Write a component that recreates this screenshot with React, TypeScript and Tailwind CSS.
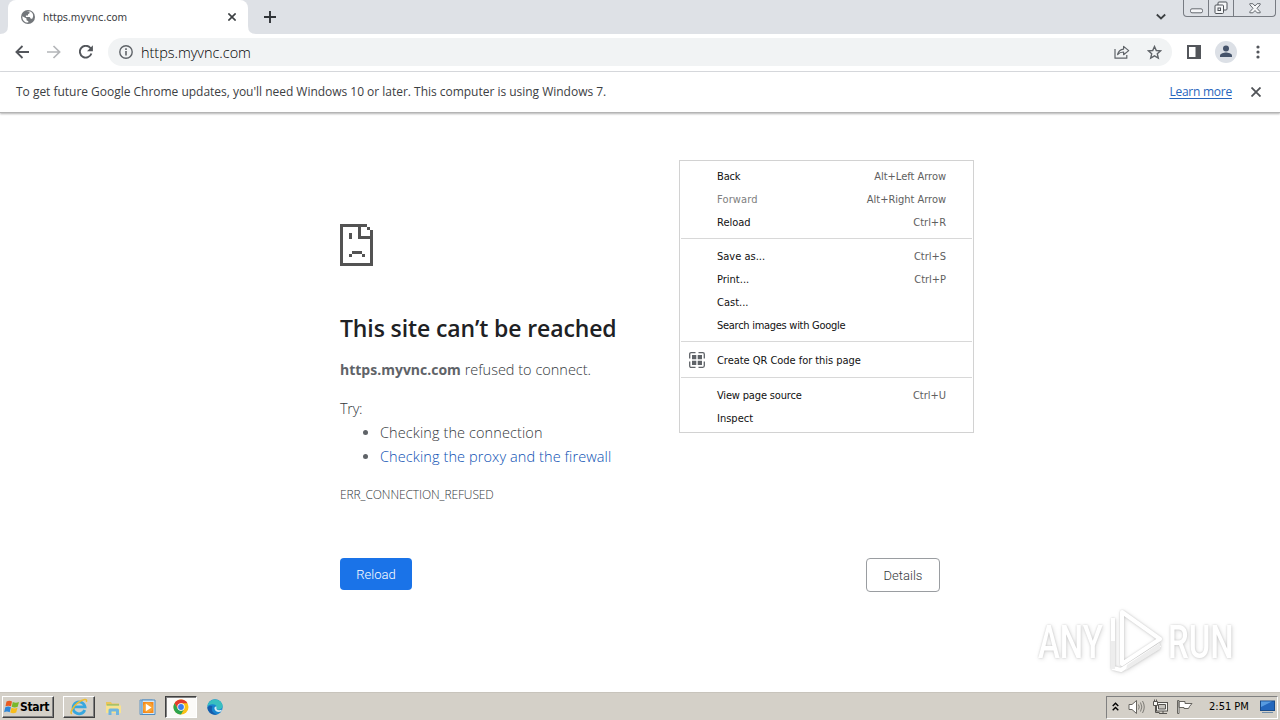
import type { ReactNode } from "react";

type MenuEntry = { label: string; keys?: string; off?: boolean; fit?: string };

const navItems: MenuEntry[] = [
  { label: "Back", keys: "Alt+Left Arrow", fit: "tracking-[-0.15px]" },
  { label: "Forward", keys: "Alt+Right Arrow", off: true, fit: "tracking-[0.15px]" },
  { label: "Reload", keys: "Ctrl+R" },
];
const pageItems: MenuEntry[] = [
  { label: "Save as...", keys: "Ctrl+S" },
  { label: "Print...", keys: "Ctrl+P" },
  { label: "Cast..." },
  { label: "Search images with Google", fit: "tracking-[-0.28px]" },
];
const devItems: MenuEntry[] = [
  { label: "View page source", keys: "Ctrl+U", fit: "tracking-[-0.17px]" },
  { label: "Inspect" },
];

function MenuRow({ label, keys, off, fit = "" }: MenuEntry) {
  return (
    <div className={`flex h-[23px] items-center justify-between pr-[27px] pl-[37px] ${off ? "text-[#808080]" : "text-[#111]"}`}>
      <span className={fit}>{label}</span>
      {keys && <span className="tracking-[-0.02px] text-[#606060]">{keys}</span>}
    </div>
  );
}

function ContextMenu() {
  return (
    <div className="absolute top-[160px] left-[679px] h-[273px] w-[295px] border border-[#d2d2d2] bg-white pt-1 font-['DejaVu_Sans_Condensed','DejaVu_Sans',sans-serif] text-[11px] leading-none whitespace-nowrap">
      {navItems.map((i) => <MenuRow key={i.label} {...i} />)}
      <div className="mx-px mt-1 mb-[6px] h-px bg-[#d8d8d8]" />
      {pageItems.map((i) => <MenuRow key={i.label} {...i} />)}
      <div className="mx-px mt-[4px] h-px bg-[#d8d8d8]" />
      <div className="flex h-[35px] items-center pl-[9px] text-[#111]">
        <svg width="16" height="16" viewBox="0 0 16 16" fill="none" stroke="#5f6368" strokeWidth="1.3">
          <path d="M.7 6.500V2.200Q.7.7 2.200.7H6.500M9.500.7h4.300q1.500 0 1.500 1.500V6.500M15.300 9.500v4.300q0 1.500-1.500 1.500H9.500M6.500 15.300H2.200q-1.500 0-1.500-1.500V9.500" />
          <path d="M3 3h4.300v4.300H3zM8.700 3H13v4.300H8.700zM3 8.700h4.300V13H3zM8.700 8.700H13V13H8.700z" fill="#5f6368" stroke="none" />
        </svg>
        <span className="mt-[2px] ml-3 tracking-[-0.04px]">Create QR Code for this page</span>
      </div>
      <div className="mx-px mb-[6px] h-px bg-[#d8d8d8]" />
      {devItems.map((i) => <MenuRow key={i.label} {...i} />)}
    </div>
  );
}

function TabStrip() {
  return (
    <div className="flex h-[34px] bg-[#dee1e6]">
      <svg width="8" height="34" className="shrink-0"><path d="M0 34Q8 34 8 26V34z" fill="#fff" /></svg>
      <div className="flex w-[240px] items-center rounded-t-lg bg-white pl-[13px]">
        <svg width="14" height="14" viewBox="0 0 14 14">
          <circle cx="7" cy="7" r="7" fill="#73777b" />
          <path d="M1.4 6.2 5.5 8.4v1.8l1.8 1.1v1.3C3.6 12.8 1 9.8 1.4 6.2zM5.6 1.8h2.9v1.5L7 4.3v1.3H4.9v1.5h3.8l1.1 1.7h1.4c1-1.6 1.3-3.4.5-5.1-.8-1.3-2-2.2-3.4-2.4z" fill="#fff" />
        </svg>
        <span className="mt-[2px] ml-[8px] font-['DejaVu_Sans_Condensed',sans-serif] text-[11px] tracking-[-0.13px] text-[#3c4043]">https.myvnc.com</span>
        <svg className="mr-[12px] ml-auto" width="8" height="8" viewBox="0 0 8 8" stroke="#3c4043" strokeWidth="1.6"><path d="m.4.4 7.2 7.2M7.6.4.4 7.6" /></svg>
      </div>
      <svg width="8" height="34" className="shrink-0"><path d="M8 34Q0 34 0 26V34z" fill="#fff" /></svg>
      <svg className="mt-[11px] ml-[8px]" width="12" height="12" stroke="#303338" strokeWidth="1.9"><path d="M6 0v12M0 6h12" /></svg>
      <svg className="mt-[13px] ml-auto" width="10" height="8" fill="none" stroke="#3c4043" strokeWidth="1.8"><path d="m.8 1.5 4.2 4 4.2-4" /></svg>
      <div className="mr-[4px] ml-[17px] flex h-[17px] w-[93px] rounded-b-[4px] border border-t-0 border-[#777b82]">
        <div className="flex w-[25px] items-end justify-center border-r border-[#777b82] pb-[2px]">
          <svg width="13" height="6" fill="#f5f6f8" stroke="#666a70"><rect x=".5" y=".8" width="12" height="4" rx="1.5" /></svg>
        </div>
        <div className="flex w-[25px] items-center justify-center border-r border-[#777b82]">
          <svg width="14" height="14" fill="#f5f6f8" stroke="#4f5359"><rect x="4" y="1" width="9" height="8" rx="1" /><rect x="1" y="4" width="8.5" height="8.5" rx="1" /><rect x="4" y="7" width="2.5" height="2.5" /></svg>
        </div>
        <div className="flex flex-1 items-center justify-center">
          <svg width="12" height="11" viewBox="0 0 12 11" fill="#f5f6f8" stroke="#666a70"><path d="M.8.7h3.1L6 3 8.1.7h3.1v1L8 5.3l3.2 3.5v1H8.1L6 7.5 3.9 9.8H.8v-1L4 5.3.8 1.7z" /></svg>
        </div>
      </div>
    </div>
  );
}

function Toolbar() {
  return (
    <div className="flex h-[38px] items-center border-b border-[#dadce0] bg-white pb-px pl-[15px]">
      <svg width="14" height="14" viewBox="0 0 14 14" fill="none" stroke="#53565b" strokeWidth="1.8"><path d="M14 7H1.5M7.5 1 1.4 7l6.1 6" /></svg>
      <svg className="ml-[18px]" width="14" height="14" viewBox="0 0 14 14" fill="none" stroke="#b4b6b9" strokeWidth="1.7"><path d="M0 7h12.5M6.5 1l6.1 6-6.1 6" /></svg>
      <svg className="ml-[18px]" width="14" height="14" viewBox="0 0 14 14" fill="none" stroke="#53565b" strokeWidth="1.9"><path d="M12.4 8.5A5.9 5.9 0 1 1 11.4 3L13 4.7" /><path d="M13.9.2v6H8z" fill="#53565b" stroke="none" /></svg>
      <div className="ml-[15px] flex h-[28px] w-[1064px] items-center rounded-full bg-[#f1f3f4] pl-[11px]">
        <svg width="14" height="14" viewBox="0 0 14 14" fill="none" stroke="#5f6368" strokeWidth="1.4"><circle cx="7" cy="7" r="6.2" /><path d="M7 6.1v4.3M7 3.3v1.6" strokeWidth="1.6" /></svg>
        <span className="mt-[2px] ml-[8px] font-['Open_Sans',sans-serif] text-[14.5px] font-light tracking-[-0.03px] text-black">https.myvnc.com</span>
        <svg className="ml-auto" width="16" height="14" viewBox="0 0 16 14" fill="none" stroke="#5f6368" strokeWidth="1.2"><path d="M1 4v9.2h11.8V10M3.6 9.6C4.4 6 6.2 4.3 9.6 4.1V1.4L14.7 5.6 9.6 9.7V7C7 7 5.2 7.700 3.6 9.600z" strokeLinejoin="round" /></svg>
        <svg className="mr-[10px] ml-[17px]" width="15" height="15" viewBox="0 0 15 15" fill="none" stroke="#5f6368" strokeWidth="1.4"><path d="m7.500 1.500 1.8 4 4.300.4-3.300 2.900 1 4.300-3.800-2.300-3.800 2.300 1-4.300-3.300-2.900 4.300-.4z" /></svg>
      </div>
      <svg className="ml-[15px]" width="14" height="14"><rect x="1" y="1" width="12" height="12" fill="none" stroke="#53565b" strokeWidth="2" /><path d="M8.500 1H14v12H8.500z" fill="#53565b" /></svg>
      <svg className="ml-[14px]" width="22" height="22"><circle cx="11" cy="11" r="11" fill="#dce0e6" /><circle cx="11" cy="7.600" r="3" fill="#46546b" /><path d="M5 16v-1.500c0-2 4-3 6-3s6 1 6 3V16z" fill="#46546b" /></svg>
      <svg className="ml-[19px]" width="4" height="14" fill="#53565b"><circle cx="2" cy="2" r="1.600" /><circle cx="2" cy="7" r="1.600" /><circle cx="2" cy="12" r="1.600" /></svg>
    </div>
  );
}

function InfoBar() {
  return (
    <div className="flex h-[41px] items-center border-b border-[#b4b4b4] bg-white pr-[19px] pl-4 font-['Open_Sans',sans-serif] text-[12px] whitespace-nowrap text-[#3c4043] shadow-[0_1px_2px_rgba(0,0,0,0.3)]">
      <span className="tracking-[-0.02px]">To get future Google Chrome updates, you'll need Windows 10 or later. This computer is using Windows 7.</span>
      <span className="ml-auto tracking-[-0.24px] text-[#2765bd] underline underline-offset-2">Learn more</span>
      <svg className="ml-[19px]" width="10" height="10" stroke="#505357" strokeWidth="1.800"><path d="m.5.5 9 9m0-9-9 9" /></svg>
    </div>
  );
}

function SadPage() {
  return (
    <svg width="33" height="42" shapeRendering="crispEdges" fill="#535353">
      <path d="M0 0h27v3H3v36h27V15H18V3h3v9h9V6h3v36H0zM27 3h3v3h-3zM9 9h3v6H9zM12 27h10v3H12zM9 30h3v3H9zM22 30h3v3h-3z" />
    </svg>
  );
}

function ErrorPage() {
  return (
    <main className="h-[579px] bg-white">
      <div className="ml-[340px] w-[600px] pt-[111px] font-['Open_Sans',sans-serif] text-[14.5px] leading-[24px] font-light text-[#34383c]">
        <SadPage />
        <h1 className="mt-[47px] text-[23px] leading-[30px] font-semibold tracking-[-0.12px] text-[#202124]">This site can’t be reached</h1>
        <p className="mt-[15px]"><b className="text-[14px] font-bold text-[#5f6368]">https.myvnc.com</b> refused to connect.</p>
        <p className="mt-[15px] tracking-[-0.3px]">Try:</p>
        <ul className="list-disc pl-10 tracking-[0.1px] marker:text-[#5f6368]">
          <li>Checking the connection</li>
          <li><span className="text-[#0b4fb3]">Checking the proxy and the firewall</span></li>
        </ul>
        <p className="mt-[14px] text-[12px] tracking-[-0.1px]">ERR_CONNECTION_REFUSED</p>
        <div className="mt-[51px] flex justify-between font-['Roboto',sans-serif] text-[13px] leading-none">
          <button className="h-8 w-[72px] rounded bg-[#1a73e8] text-white">Reload</button>
          <button className="h-[34px] w-[74px] rounded border border-[#9a9da1]">Details</button>
        </div>
      </div>
    </main>
  );
}

function Watermark() {
  return (
    <div className="absolute top-[608px] left-[1038px] flex h-[66px] w-[200px] items-center font-['Roboto',sans-serif] text-[47px] leading-none font-medium text-white [filter:drop-shadow(0_0_1px_rgba(0,0,0,0.16))_drop-shadow(1px_1px_2px_rgba(0,0,0,0.13))]">
      <span className="w-[70px]"><span className="inline-block origin-left scale-x-[0.7]">ANY</span></span>
      <svg width="60" height="66" viewBox="0 0 60 66" fill="none" stroke="#fff" strokeWidth="4" strokeLinejoin="round"><path d="M14 4 52 31 14 56zM5 10v50l8 2 39-25" /><path d="M19 57 52 35v6L18 62zM3 33h4v28H3z" fill="#ededed" stroke="none" /></svg>
      <span className="w-[66px]"><span className="inline-block origin-left scale-x-[0.7]">RUN</span></span>
    </div>
  );
}

function TaskButton({ children, look = "" }: { children: ReactNode; look?: string }) {
  return <div className={`flex h-[22px] w-8 items-center justify-center ${look}`}>{children}</div>;
}

function Taskbar() {
  return (
    <footer className="flex h-[28px] items-center border-t border-[#c8c4bc] bg-[#d4d0c8] pt-px font-['DejaVu_Sans_Condensed','DejaVu_Sans',sans-serif] text-[11px] whitespace-nowrap text-black">
      <div className="ml-[2px] flex h-[22px] w-[52px] items-center border border-t-white border-r-[#404040] border-b-[#404040] border-l-white pl-px shadow-[inset_-1px_-1px_#808080]">
        <svg width="16" height="16" viewBox="0 0 16 16">
          <path d="M2.500 2.500q3-1.500 5.500 0L7 7.300q-2.500-1.300-5.500 0z" fill="#e95b20" />
          <path d="M8.800 3q3 1.400 6.200 0l-1.300 4.800q-3 1.300-6 0z" fill="#79b82b" />
          <path d="M1.300 8.200q3-1.200 5.600 0l-1.200 5q-2.700-1.300-5.600 0z" fill="#2d86d8" />
          <path d="M7.500 8.700q3 1.400 6 0l-1.300 4.800q-3 1.400-5.900 0z" fill="#f8bd1b" />
        </svg>
        <span className="text-[12px] font-bold tracking-[-0.35px]">Start</span>
      </div>
      <div className="ml-[9px] flex gap-[2px]">
        <TaskButton look="border border-t-white border-l-white border-r-[#404040] border-b-[#404040] shadow-[inset_-1px_-1px_#808080]">
          <svg width="18" height="18" viewBox="0 0 18 18" fill="none">
            <path d="M14.700 12A6 6 0 1 1 15 8.800H4.500" stroke="#36a7df" strokeWidth="2.800" />
            <path d="M2 15.500c-3 0 1-7 6-10.800C13 .8 18 .2 16.300 4" stroke="#edbd31" strokeWidth="1.500" />
          </svg>
        </TaskButton>
        <TaskButton>
          <svg width="17" height="17" viewBox="0 0 17 17"><path d="M1 3h5l1 1.500h7V14H1z" fill="#e9c65a" /><path d="M2 5.500h12V9H2z" fill="#74b96d" /><path d="M1 6.500h15V14H1z" fill="#f8e28f" /><path d="M3.500 16v-5q0-1.500 1.500-1.500h7.500q1.500 0 1.500 1.500v5h-3v-3.500H6.500V16z" fill="#70b5df" /></svg>
        </TaskButton>
        <TaskButton>
          <svg width="17" height="17" viewBox="0 0 17 17"><path d="M1 1h12.500v14.500H1z" fill="#b4d5ef" stroke="#6698c4" /><path d="M3 1h13v14.500H3z" fill="#d5e8f7" stroke="#4f8cc2" /><path d="M4 3h10.500v11H4z" fill="#f58a1c" /><circle cx="9" cy="8.500" r="5" fill="#f9a334" /><path d="m6.800 4.800 5.800 3.700-5.800 3.700z" fill="#fff" /></svg>
        </TaskButton>
        <TaskButton look="border border-t-[#404040] border-l-[#404040] border-r-white border-b-white bg-[#fbfaf8] shadow-[inset_1px_1px_#808080]">
          <svg width="16" height="16" viewBox="0 0 16 16">
            <circle cx="8" cy="8" r="7.500" fill="#fbc116" />
            <path d="M1.500 4.250A7.500 7.500 0 0 1 14.500 4.250H8L4.750 9.870z" fill="#e33b2e" />
            <path d="M1.500 4.250 4.750 9.870 8 11.750l3.250-1.880L8 15.500A7.500 7.500 0 0 1 1.500 4.250z" fill="#2da44e" />
            <circle cx="8" cy="8" r="3.700" fill="#fff" /><circle cx="8" cy="8" r="2.900" fill="#3b7ded" />
          </svg>
        </TaskButton>
        <TaskButton>
          <svg width="16" height="16" viewBox="0 0 16 16">
            <circle cx="8" cy="8" r="7.700" fill="#1784d0" />
            <path d="M.4 7.500C1 1.500 7-.8 11.500 1.200 15.800 3 17 8.500 13.500 10.200c-2 .9-4.500.3-4.200-.8C10.500 7 8 5 5.500 5.200 3 5.300 1 6.500.4 7.500z" fill="#38bfc0" />
            <path d="M9.500 9c-.5 1.700 1.500 2.800 5.500 1.700l-.9 1.800c-3.300 1.200-6.500-.4-6.700-3 0-1.400 1-2.500 2.100-2z" fill="#d4ecf5" />
            <path d="M5.500 7.500C3.500 11 6 15 10.500 15.300 5 16.800.8 13 .4 8.500 2 6.500 4 6.300 5.500 7.500z" fill="#165baa" />
          </svg>
        </TaskButton>
      </div>
      <div className="mr-[2px] ml-auto flex h-[23px] w-[172px] items-center border border-t-[#808080] border-r-white border-b-white border-l-[#808080] pl-[5px]">
        <svg className="-mt-[2px]" width="7" height="9" fill="none" stroke="#000" strokeWidth="1.400"><path d="m.7 4 2.800-2.800L6.300 4M.7 8.200l2.800-2.800 2.800 2.800" /></svg>
        <svg className="ml-[9px]" width="17" height="16" fill="#fff" stroke="#66645f"><path d="M1 5.500h3L8.500 1.500v13L4 10.500H1z" /><path d="M10.500 5.500q1.500 2.500 0 5M12.500 3.500q2.700 4.500 0 9M14.500 2q3.500 6 0 12" fill="none" strokeWidth=".8" /></svg>
        <svg className="ml-[7px]" width="17" height="16" fill="#f7f7f4" stroke="#55534f"><rect x="4.500" y="3.500" width="11" height="8.500" /><path d="M6.500 5.500h7v4.500h-7z" fill="#c6c4be" /><path d="M7 14.500h8M11 12v2.500" /><path d="M1.500 2.500h4v4h-4zM2.500.5v2M4.500.5v2" /><path d="M3.500 6.500v7h4" fill="none" /></svg>
        <svg className="ml-[7px]" width="17" height="16" fill="#fff" stroke="#66645f"><path d="M1.500 1.500h1.500v13H1.500zM3 2.500h6v2h7L13.500 7.500l-1 2H8v-1H3z" /></svg>
        <span className="mt-px ml-[16px]">2:51 PM</span>
        <svg className="ml-[11px]" width="15" height="14"><rect x=".5" y="1" width="14" height="9.500" fill="#2367bd" stroke="#194b8a" /><path d="M1 1.500h11L1 7z" fill="#579be0" /><path d="M2 12.500h11" stroke="#718da8" /></svg>
      </div>
    </footer>
  );
}

export default function App() {
  return (
    <div className="relative flex h-[720px] w-[1280px] flex-col overflow-hidden bg-white">
      <TabStrip />
      <Toolbar />
      <div className="relative z-10"><InfoBar /></div>
      <ErrorPage />
      <Taskbar />
      <ContextMenu />
      <Watermark />
    </div>
  );
}
